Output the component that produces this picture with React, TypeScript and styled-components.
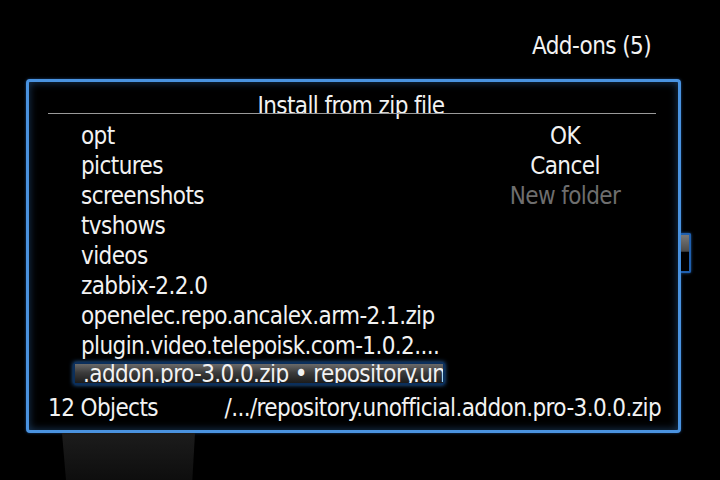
import { FC } from "react"
import styled, { createGlobalStyle } from "styled-components"

const GlobalStyle = createGlobalStyle`
  html, body {
    margin: 0;
    padding: 0;
    background: #000;
  }
  body {
    font-family: "DejaVu Sans Condensed", "DejaVu Sans", sans-serif;
    font-stretch: condensed;
    font-size: 24px;
    letter-spacing: -0.6px;
    color: #f2f2f2;
  }
`

const Screen = styled.div`
  position: relative;
  width: 720px;
  height: 480px;
  overflow: hidden;
  background: #000;
  display: flex;
  flex-direction: column;
`

const Header = styled.div`
  height: 79px;
  display: flex;
  justify-content: flex-end;
  padding: 30px 69px 0 0;
  box-sizing: border-box;
  line-height: 32px;
`

const Shade = styled.div`
  position: absolute;
  left: 62px;
  top: 433px;
  width: 133px;
  height: 47px;
  background: linear-gradient(180deg, #1c1c1c, #0e0e0e);
  clip-path: polygon(0 0, 100% 0, 98% 100%, 3% 100%);
`

const Dialog = styled.div`
  position: relative;
  margin-left: 26px;
  width: 655px;
  height: 354px;
  box-sizing: border-box;
  border: 3px solid #4a93e0;
  border-radius: 4px;
  background: #000;
  box-shadow: inset 0 0 8px rgba(60, 130, 210, 0.45), 0 0 3px rgba(40, 110, 200, 0.6);
  display: flex;
  flex-direction: column;
  padding: 0 0 0 19px;
`

const TitleRow = styled.div`
  position: relative;
  height: 39px;
  display: flex;
  justify-content: center;
  align-items: flex-end;
  line-height: 28px;
  padding: 0 24px 1px 0;
  box-sizing: border-box;
  &::before {
    content: "";
    position: absolute;
    left: 0;
    right: 22px;
    top: 31px;
    height: 1px;
    background: #9a9a9a;
  }
`

const Body = styled.div`
  display: flex;
`

const List = styled.div`
  width: 400px;
  display: flex;
  flex-direction: column;
`

const Item = styled.div<{ $selected?: boolean }>`
  height: 30px;
  display: flex;
  align-items: center;
  white-space: nowrap;
  overflow: hidden;
  padding-left: 33px;
  ${p =>
    p.$selected &&
    `
    height: 23px;
    margin: 1px 0 3px 25px;
    width: 372px;
    box-sizing: border-box;
    padding-left: 8px;
    line-height: 22px;
    border: 2px solid #0b2f5c;
    border-radius: 2px;
    background: linear-gradient(180deg, #6a6a6a 0%, #3c3c3c 45%, #1c1c1c 100%);
    box-shadow: 0 0 4px rgba(50, 130, 220, 0.8);
  `}
`

const Buttons = styled.div`
  flex: 1;
  display: flex;
  flex-direction: column;
  align-items: center;
  padding-left: 4px;
`

const Button = styled.div<{ $disabled?: boolean }>`
  height: 30px;
  display: flex;
  align-items: center;
  color: ${p => (p.$disabled ? "#6e6e6e" : "#f2f2f2")};
`

const Footer = styled.div`
  flex: 1;
  display: flex;
  align-items: center;
  justify-content: space-between;
  padding: 0 17px 2px 0;
  box-sizing: border-box;
`

const Scrollbar = styled.div`
  position: absolute;
  right: -13px;
  top: 151px;
  width: 10px;
  height: 40px;
  box-sizing: border-box;
  border: 2px solid #1f5fae;
  border-left: none;
  border-radius: 0 2px 2px 0;
  background: linear-gradient(180deg, #7a7a7a 0%, #4a4a4a 45%, #000 48%, #000 100%);
  box-shadow: 0 0 3px rgba(50, 130, 220, 0.7);
`

const items = [
  "opt",
  "pictures",
  "screenshots",
  "tvshows",
  "videos",
  "zabbix-2.2.0",
  "openelec.repo.ancalex.arm-2.1.zip",
  "plugin.video.telepoisk.com-1.0.2....",
]

const App: FC = () => (
  <Screen>
    <GlobalStyle />
    <Header>Add-ons (5)</Header>
    <Dialog>
      <TitleRow>Install from zip file</TitleRow>
      <Body>
        <List>
          {items.map(i => (
            <Item key={i}>{i}</Item>
          ))}
          <Item $selected>.addon.pro-3.0.0.zip • repository.un</Item>
        </List>
        <Buttons>
          <Button>OK</Button>
          <Button>Cancel</Button>
          <Button $disabled>New folder</Button>
        </Buttons>
      </Body>
      <Footer>
        <span>12 Objects</span>
        <span>/.../repository.unofficial.addon.pro-3.0.0.zip</span>
      </Footer>
      <Scrollbar />
    </Dialog>
    <Shade />
  </Screen>
)

export default App
